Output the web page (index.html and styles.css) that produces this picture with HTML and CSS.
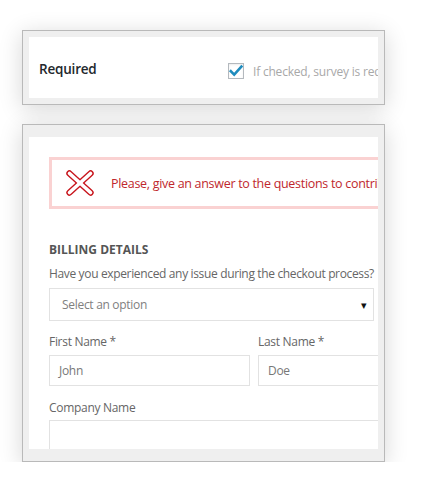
FILE: index.html
```html
<!DOCTYPE html>
<html>
<head>
<meta charset="utf-8">
<link rel="stylesheet" href="styles.css">
</head>
<body>
<div class="win win-top">
  <div class="pane setting-row">
    <span class="setting-label">Required</span>
    <label class="check">
      <span class="box"><svg width="14" height="14" viewBox="0 0 14 14"><path d="M1.8 7.2 L5.2 10.6 L12.4 2.6" fill="none" stroke="#1e8cbe" stroke-width="2.6" stroke-linecap="square"/></svg></span>
      <span class="check-text">If checked, survey is required to complete the checkout</span>
    </label>
  </div>
</div>

<div class="win win-form">
  <div class="pane form">
    <div class="alert">
      <svg class="alert-icon" width="28" height="26" viewBox="0 0 28 26">
        <g stroke-linecap="round">
          <line x1="3.5" y1="3.5" x2="24.5" y2="22.5" stroke="#c8161d" stroke-width="6.4"/>
          <line x1="24.5" y1="3.5" x2="3.5" y2="22.5" stroke="#c8161d" stroke-width="6.4"/>
          <line x1="3.5" y1="3.5" x2="24.5" y2="22.5" stroke="#fff" stroke-width="3.6"/>
          <line x1="24.5" y1="3.5" x2="3.5" y2="22.5" stroke="#fff" stroke-width="3.6"/>
        </g>
      </svg>
      <span class="alert-text">Please, give an answer to the questions to contribute to our survey.</span>
    </div>

    <h3 class="section-title">BILLING DETAILS</h3>
    <p class="question">Have you experienced any issue during the checkout process?</p>
    <div class="select"><span>Select an option</span><span class="caret">▾</span></div>

    <div class="two-col">
      <div class="field">
        <span class="field-label">First Name *</span>
        <div class="input input-first">John</div>
      </div>
      <div class="field">
        <span class="field-label">Last Name *</span>
        <div class="input input-last">Doe</div>
      </div>
    </div>

    <div class="field field-company">
      <span class="field-label">Company Name</span>
      <div class="input input-wide"></div>
    </div>
  </div>
</div>
</body>
</html>
```

FILE: styles.css
```css
html, body {
  margin: 0;
  padding: 0;
  background: #fff;
}

body {
  padding-top: 30px;
  font-family: "Open Sans", "Liberation Sans", sans-serif;
}

.win {
  margin-left: 22px;
  width: 363px;
  box-sizing: border-box;
  border: 1px solid #b9b9b9;
  background: #efefef;
  box-shadow: 0 4px 22px rgba(0, 0, 0, 0.16);
}

.win-top {
  padding: 6px;
}

.win-form {
  margin-top: 19px;
  padding: 12px 6px;
}

.pane {
  background: #fff;
  overflow: hidden;
}

.setting-row {
  height: 61px;
  box-sizing: border-box;
  display: flex;
  align-items: center;
  padding: 3px 0 0 10px;
  white-space: nowrap;
}

.setting-label {
  flex: 0 0 189px;
  font-size: 13.5px;
  letter-spacing: -0.2px;
  font-weight: 600;
  color: #23282d;
}

.check {
  display: flex;
  align-items: center;
  gap: 9px;
  margin-top: 4px;
}

.box {
  flex: 0 0 auto;
  width: 14px;
  height: 14px;
  border: 1px solid #b4b9be;
  background: #fff;
  display: flex;
  align-items: center;
  justify-content: center;
  box-shadow: inset 0 1px 2px rgba(0,0,0,0.08);
}

.check-text {
  font-size: 12px;
  letter-spacing: -0.2px;
  color: #a8a8a8;
}

.form {
  height: 312px;
  padding: 20px 0 0 20px;
  box-sizing: border-box;
  white-space: nowrap;
}

.alert {
  width: 420px;
  height: 52px;
  box-sizing: border-box;
  border: 3px solid #fad2d2;
  display: flex;
  align-items: center;
  padding-left: 14px;
}

.alert-icon {
  flex: 0 0 auto;
  margin-right: 17px;
}

.alert-text {
  font-size: 12.5px;
  letter-spacing: -0.3px;
  color: #c0272d;
}

.section-title {
  margin: 33px 0 0 0;
  font-size: 12px;
  font-weight: 700;
  color: #555;
  line-height: 16px;
}

.question {
  margin: 8px 0 0 0;
  font-size: 12px;
  letter-spacing: -0.35px;
  color: #666;
  line-height: 16px;
}

.select {
  margin-top: 6px;
  width: 325px;
  height: 33px;
  box-sizing: border-box;
  border: 1px solid #e2e2e2;
  display: flex;
  align-items: center;
  justify-content: space-between;
  padding: 0 6px 0 12px;
  font-size: 12px;
  letter-spacing: -0.3px;
  color: #808080;
}

.caret {
  color: #111;
  font-size: 11px;
}

.two-col {
  display: flex;
  gap: 8px;
  margin-top: 13px;
}

.field {
  display: flex;
  flex-direction: column;
}

.field-label {
  font-size: 12px;
  letter-spacing: -0.3px;
  color: #666;
  line-height: 16px;
}

.input {
  margin-top: 5px;
  height: 31px;
  box-sizing: border-box;
  border: 1px solid #e2e2e2;
  display: flex;
  align-items: center;
  padding-left: 9px;
  font-size: 12px;
  letter-spacing: -0.3px;
  color: #777;
}

.input-first,
.input-last {
  width: 201px;
}

.field-company {
  margin-top: 14px;
}

.field-company .input {
  margin-top: 4px;
}

.input-wide {
  width: 410px;
  height: 40px;
}
```
